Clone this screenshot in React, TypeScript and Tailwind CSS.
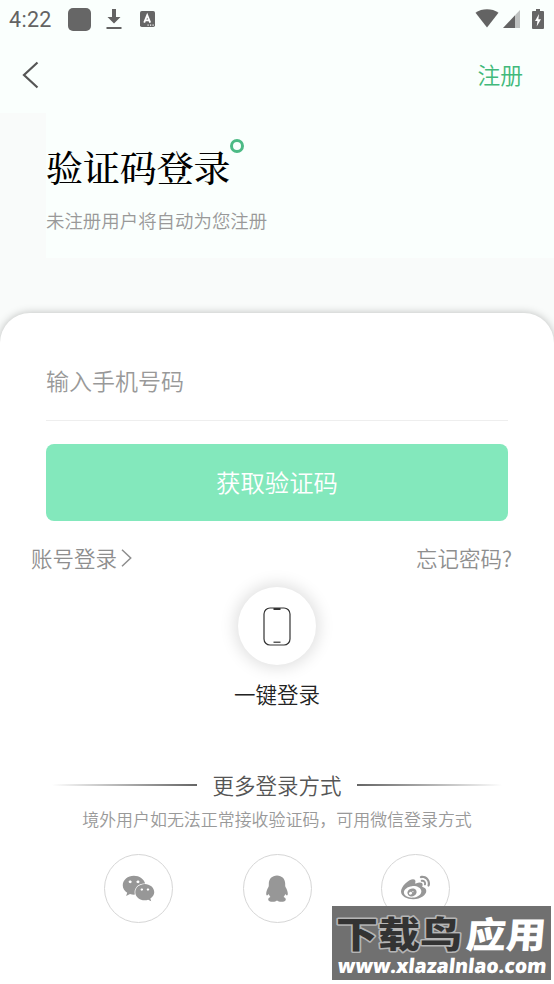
import type { ReactNode } from "react";
import { FaWeibo, FaWeixin } from "react-icons/fa";

function StatusBar() {
  return (
    <div className="flex h-[38px] items-center pl-[9px] pr-[10px] text-[#636363]">
      <span className="w-[59px] pt-[1px] font-[Roboto] text-[21.5px] font-normal leading-[38px] tracking-[0.3px]">4:22</span>
      <div className="h-[23px] w-[23px] rounded-[5px] bg-[#666]" />
      <svg className="ml-[15px]" width="16" height="22" viewBox="0 0 16 22" fill="currentColor">
        <path d="M6 1h4v8h4.500L8 15.500 1.500 9H6zM0.500 19h15v2H0.500z" />
      </svg>
      <svg className="ml-[18px]" width="15" height="16" viewBox="0 0 15 16">
        <rect width="15" height="16" rx="1.8" fill="#666" />
        <path d="M4.200 11.600 7.200 4.200 10.200 11.600M5.200 9.300h4" fill="none" stroke="#fff" strokeWidth="1.8" />
        <path d="M7.500 13.500h1.200v1.200H7.500zM10 13.500h1.200v1.200H10zM12.500 13.500h1.200v1.200h-1.200z" fill="#fff" />
      </svg>
      <div className="ml-auto flex items-center">
        <svg width="24" height="20" viewBox="0 0 24 20" fill="currentColor">
          <path d="M0.500 3.800C7-.8 17-.8 23.500 3.800L12 18.500z" />
        </svg>
        <svg className="ml-[4px]" width="17" height="18" viewBox="0 0 17 18" fill="currentColor">
          <path d="M17 0v18H12V5.300z" opacity=".4" />
          <path d="M12 5.300V18H0z" />
        </svg>
        <svg className="ml-[12px]" width="12" height="20" viewBox="0 0 12 20">
          <path d="M4 0h4v2h3q1 0 1 1v16q0 1-1 1H1q-1 0-1-1V3q0-1 1-1h3z" fill="#666" />
          <path d="M7 5 3 12h2.400l-.7 5.500L9 10.200H6.400z" fill="#fff" />
        </svg>
      </div>
    </div>
  );
}

function SocialButton({ children }: { children: ReactNode }) {
  return (
    <button className="flex h-[69px] w-[69px] items-center justify-center rounded-full border-[1.5px] border-[#d6d6d6] text-[#979797]">
      {children}
    </button>
  );
}

function QqIcon() {
  return (
    <svg width="22" height="27" viewBox="0 0 22 27" fill="currentColor">
      <path d="M11 .5c5 0 8.200 3.600 8.200 8.200 0 1.300-.1 2.200.3 3.200 1.200 2.100 2.300 4.300 2.300 6.600 0 1.300-.3 2-.8 2-.6 0-1.300-.8-1.700-1.500-.3 1.100-.9 2.200-1.700 3 1.400.6 2.200 1.300 2.200 2.400 0 1.700-1.900 2.300-4.500 2.300-1.900 0-3.300-.5-4.300-1.300-1 .8-2.400 1.300-4.300 1.300-2.600 0-4.500-.6-4.500-2.300 0-1.100.8-1.800 2.200-2.400-.8-.8-1.400-1.900-1.700-3-.4.7-1.100 1.500-1.700 1.500-.5 0-.8-.7-.8-2 0-2.300 1.100-4.500 2.300-6.600.4-1 .3-1.900.3-3.200C2.800 4.100 6 .5 11 .5z" />
    </svg>
  );
}

function Watermark() {
  return (
    <div className="absolute left-[332px] top-[906px] h-[74px] w-[219px] bg-[#6b6b6b]/97">
      <svg width="219" height="74" viewBox="0 0 219 74">
        <g fontFamily="'Noto Sans CJK SC', sans-serif" fontWeight="900" fontSize="36" strokeLinejoin="round">
          <text x="4" y="42" textLength="126" lengthAdjust="spacingAndGlyphs" fill="#333" stroke="#b5b5b5" strokeWidth="3" paintOrder="stroke">下载鸟</text>
          <text transform="translate(133 42) skewX(-5)" textLength="80" lengthAdjust="spacingAndGlyphs" fill="#fff">应用</text>
        </g>
        <text transform="translate(5 67) skewX(-6)" textLength="209" lengthAdjust="spacingAndGlyphs" fontFamily="'Open Sans', 'Noto Sans', sans-serif" fontWeight="800" fontSize="20" fill="#fff">www.xlazalnlao.com</text>
      </svg>
    </div>
  );
}

export default function App() {
  return (
    <div className="relative flex h-[984px] w-[554px] flex-col overflow-hidden bg-[#f9fbfa] font-['Noto_Sans_CJK_SC',sans-serif] font-[350]">
      <header className="h-[113px] bg-[#fafffd]">
        <StatusBar />
        <nav className="flex h-[75px] items-center justify-between pl-[22px] pr-[31px]">
          <svg className="-mt-[2px]" width="17" height="28" viewBox="0 0 17 28" fill="none" stroke="#555" strokeWidth="2.2">
            <path d="M15.500 1.500 2 14l13.500 12.500" />
          </svg>
          <button className="text-[22.8px] leading-none text-[#41b97a]">注册</button>
        </nav>
      </header>

      <section className="ml-[46px] h-[145px] bg-[#fafffd] pt-[30px]">
        <div className="flex">
          <h1 className="font-['Noto_Serif_CJK_SC','Noto_Sans_CJK_SC',serif] text-[36.9px] font-medium leading-[48px] text-black">验证码登录</h1>
          <span className="-mt-[4px] h-[14px] w-[14px] rounded-full border-[3px] border-[#4cba85]" />
        </div>
        <p className="mt-[15px] text-[18.45px] leading-[28px] text-[#999]">未注册用户将自动为您注册</p>
      </section>

      {/* Login card */}
      <main className="mt-[55px] flex-1 rounded-t-[30px] bg-white pt-[43px] shadow-[0_0_9px_rgba(0,0,0,0.25)]">
        <div className="mx-[46px] h-[65px] border-b border-[#eee]">
          <input
            className="block h-[47px] w-full text-[23px] outline-none placeholder:text-[#999]"
            placeholder="输入手机号码"
          />
        </div>
        <button className="mx-[46px] mt-[23px] block h-[77px] w-[462px] rounded-[8px] bg-[#83e8bc] text-[24.4px] text-white">
          获取验证码
        </button>

        <div className="mt-[21px] flex h-[32px] items-center justify-between pl-[31px] pr-[42px] text-[21.5px] leading-[32px] text-[#8e8e8e]">
          <button className="flex items-center">
            账号登录
            <svg className="ml-[4px]" width="11" height="18" viewBox="0 0 11 18" fill="none" stroke="currentColor" strokeWidth="1.5">
              <path d="M1 .8 9.700 9 1 17.200" />
            </svg>
          </button>
          <button>忘记密码?</button>
        </div>

        <div className="mt-[13px] flex flex-col items-center">
          <button className="flex h-[78px] w-[78px] items-center justify-center rounded-full bg-white shadow-[0_0_16px_3px_rgba(0,0,0,0.13)]">
            <svg width="28" height="39" viewBox="0 0 28 39" fill="none" stroke="#333">
              <rect x="1" y="1" width="26" height="37" rx="6" strokeWidth="1.2" />
              <path d="M10.500 2h7" strokeWidth="2" />
              <path d="M10.500 35.200h7" strokeWidth="1.2" />
            </svg>
          </button>
          <span className="mt-[13px] text-[21.5px] leading-[32px] text-[#222]">一键登录</span>
        </div>

        <div className="mt-[59px] flex h-[32px] items-center justify-center gap-[15px]">
          <span className="h-[1.5px] w-[145px] bg-linear-to-r from-white to-[#666]" />
          <span className="text-[21.5px] leading-[32px] text-[#555]">更多登录方式</span>
          <span className="h-[1.5px] w-[145px] bg-linear-to-l from-white to-[#666]" />
        </div>
        <p className="mt-[5px] whitespace-nowrap text-center text-[16.95px] leading-[26px] text-[#999]">境外用户如无法正常接收验证码，可用微信登录方式</p>

        <div className="mt-[21.5px] flex justify-center gap-[69.5px]">
          <SocialButton><FaWeixin size={33} /></SocialButton>
          <SocialButton><QqIcon /></SocialButton>
          <SocialButton><FaWeibo size={29} /></SocialButton>
        </div>
      </main>
      <Watermark />
    </div>
  );
}
